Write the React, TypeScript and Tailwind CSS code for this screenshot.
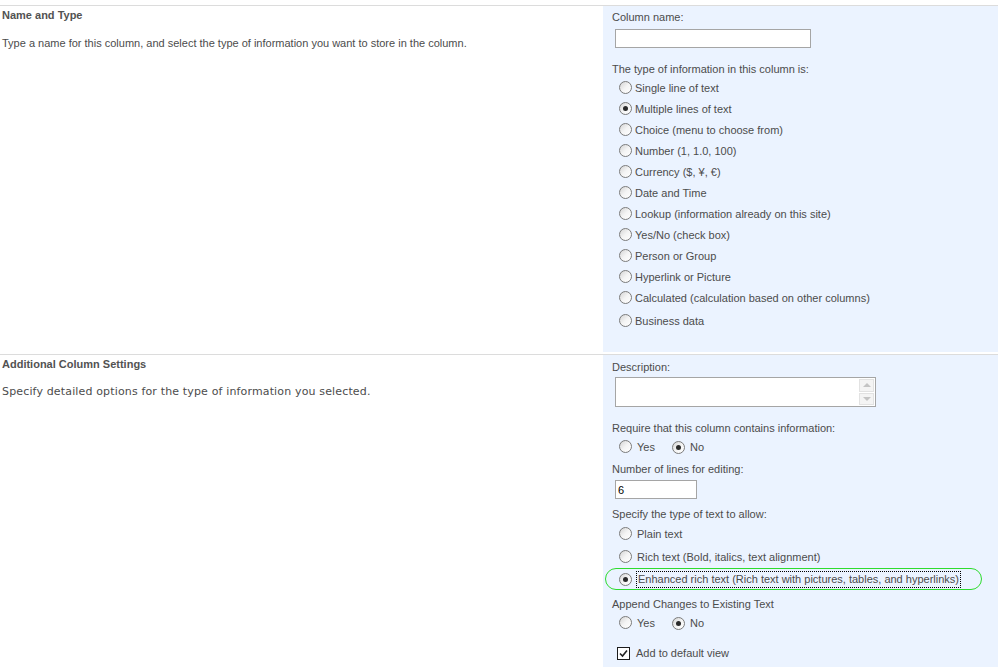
import React from "react";

const FONT = "font-[family-name:Tahoma,'Liberation_Sans',sans-serif] text-[11px] text-[#4c4c4c]";

const Radio = ({ checked = false }: { checked?: boolean }) => (
  <span className="relative inline-flex h-[13px] w-[13px] shrink-0 items-center justify-center rounded-full border border-[#7b7b7b] bg-gradient-to-br from-[#d4d4d4] via-[#f4f4f4] to-white">
    {checked && <span className="h-[5px] w-[5px] rounded-full bg-[#2a2a2a]" />}
  </span>
);

const typeOptions = [
  "Single line of text",
  "Multiple lines of text",
  "Choice (menu to choose from)",
  "Number (1, 1.0, 100)",
  "Currency ($, ¥, €)",
  "Date and Time",
  "Lookup (information already on this site)",
  "Yes/No (check box)",
  "Person or Group",
  "Hyperlink or Picture",
  "Calculated (calculation based on other columns)",
];

const YesNo = () => (
  <div className="flex h-[21px] items-center pl-[7px]">
    <Radio />
    <span className="ml-[5px]">Yes</span>
    <span className="ml-[17px]">
      <Radio checked />
    </span>
    <span className="ml-[5px]">No</span>
  </div>
);

const App = () => {
  return (
    <div className={`${FONT} h-[667px] w-[998px] overflow-hidden bg-white pt-[5px] leading-[14px]`}>
      {/* Name and Type */}
      <div className="flex h-[349px] border-t border-[#dcdcdc]">
        <div className="flex-1 pl-[2px] pt-[2px]">
          <div className="font-bold text-[#525252]">Name and Type</div>
          <div className="mt-[14px]">
            Type a name for this column, and select the type of information you want to store in the column.
          </div>
        </div>
        <div className="mb-[2px] w-[395px] bg-[#ebf3ff] pl-[9px] pt-[4px]">
          <div>Column name:</div>
          <input
            type="text"
            className="ml-[3px] mt-[5px] block h-[19px] w-[196px] border border-[#a5a5a5] bg-white outline-none"
          />
          <div className="mt-[14px]">The type of information in this column is:</div>
          <div className="mt-[1px]">
            {typeOptions.map((label, i) => (
              <div key={label} className="flex h-[21px] items-center pl-[7px]">
                <Radio checked={i === 1} />
                <span className="ml-[3px]">{label}</span>
              </div>
            ))}
            <div className="mt-[2px] flex h-[21px] items-center pl-[7px]">
              <Radio />
              <span className="ml-[3px]">Business data</span>
            </div>
          </div>
        </div>
      </div>

      {/* Additional Column Settings */}
      <div className="flex h-[318px] border-t border-[#dcdcdc]">
        <div className="flex-1 pl-[2px] pt-[2px]">
          <div className="font-bold text-[#525252]">Additional Column Settings</div>
          <div className="mt-[14px] font-[family-name:'DejaVu_Sans',sans-serif] text-[11px] tracking-[0.15px]">
            Specify detailed options for the type of information you selected.
          </div>
        </div>
        <div className="w-[395px] bg-[#ebf3ff] pl-[9px] pt-[5px]">
          <div>Description:</div>
          <div className="ml-[3px] mt-[3px] flex h-[30px] w-[261px] border border-[#a5a5a5] bg-white">
            <div className="flex-1" />
            <div className="flex w-[17px] flex-col gap-[1px] p-[1px]">
              <div className="flex flex-1 items-center justify-center border border-[#e2e2e2] bg-[#f4f4f4]">
                <span className="h-0 w-0 border-x-[4px] border-b-[4px] border-x-transparent border-b-[#c4c4c4]" />
              </div>
              <div className="flex flex-1 items-center justify-center border border-[#e2e2e2] bg-[#f4f4f4]">
                <span className="h-0 w-0 border-x-[4px] border-t-[4px] border-x-transparent border-t-[#c4c4c4]" />
              </div>
            </div>
          </div>
          <div className="mt-[14px]">Require that this column contains information:</div>
          <div className="mt-[1px]">
            <YesNo />
          </div>
          <div className="mt-[5px]">Number of lines for editing:</div>
          <input
            type="text"
            defaultValue="6"
            className="ml-[3px] mt-[4px] block h-[19px] w-[82px] border border-[#a5a5a5] bg-white px-[2px] text-[11px] text-black outline-none"
          />
          <div className="mt-[8px]">Specify the type of text to allow:</div>
          <div className="mt-[1px]">
            <div className="flex h-[23px] items-center pl-[7px]">
              <Radio />
              <span className="ml-[5px]">Plain text</span>
            </div>
            <div className="flex h-[23px] items-center pl-[7px]">
              <Radio />
              <span className="ml-[5px]">Rich text (Bold, italics, text alignment)</span>
            </div>
            <div className="-ml-[7px] flex h-[22px] w-[377px] items-center rounded-full border border-[#2edc2e] pl-[13px]">
              <Radio checked />
              <span className="ml-[4px] border border-dotted border-black px-[1px] leading-[15px]">
                Enhanced rich text (Rich text with pictures, tables, and hyperlinks)
              </span>
            </div>
          </div>
          <div className="mt-[7px]">Append Changes to Existing Text</div>
          <div className="mt-[1px]">
            <YesNo />
          </div>
          <div className="mt-[9px] flex h-[22px] items-center pl-[5px]">
            <span className="flex h-[13px] w-[13px] items-center justify-center border border-[#1c1c1c] bg-white">
              <svg width="9" height="9" viewBox="0 0 9 9">
                <path d="M1 4.5 L3.5 7 L8 1.5" fill="none" stroke="#222" strokeWidth="1.6" />
              </svg>
            </span>
            <span className="ml-[6px]">Add to default view</span>
          </div>
        </div>
      </div>
    </div>
  );
};

export default App;
